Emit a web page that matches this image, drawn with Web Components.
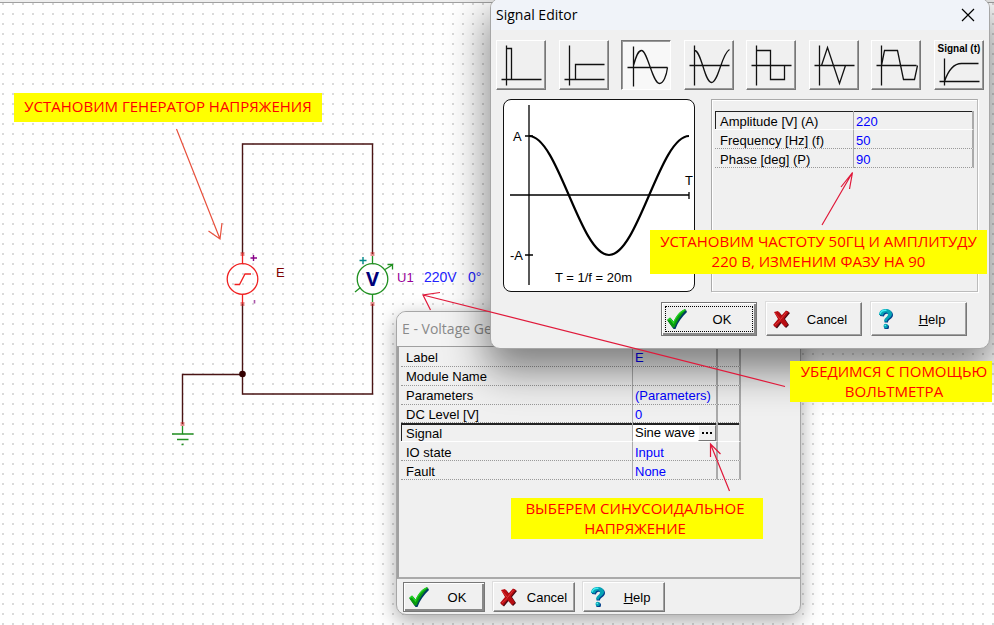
<!DOCTYPE html>
<html lang="ru">
<head>
<meta charset="utf-8">
<title>Signal Editor</title>
<style>
  body { margin: 0; font-family: "Liberation Sans", Arial, sans-serif; font-size: 13px; color: #000; }
</style>
</head>
<body>
<schematic-desktop></schematic-desktop>

<script>
const define = (name, html, setup) => {
  const template = document.createElement('template');
  template.innerHTML = html;
  customElements.define(name, class extends HTMLElement {
    constructor() {
      super();
      this.attachShadow({ mode: 'open' }).append(template.content.cloneNode(true));
    }
    connectedCallback() { if (setup) setup(this, this.shadowRoot); }
  });
};

/* Yellow callout */
define('note-label', `
  <style>
    :host { display: block; box-sizing: border-box; background: #ff0; color: #f00; text-align: center;
            font: 15px/20px "Open Sans", "Noto Sans", sans-serif; white-space: nowrap; padding: 0 2px 1px; }
  </style>
  <slot></slot>`);

/* Window frame */
define('app-window', `
  <style>
    :host { display: flex; flex-direction: column; box-sizing: border-box; background: #f0f0f0;
            border: 1px solid #a6a6a6; border-radius: 10px; overflow: hidden; }
    header { display: flex; align-items: center; justify-content: space-between; background: var(--bar, #f0f3f9);
             color: var(--bar-text, #000); padding: 0 14px 0 5px; height: var(--bar-height, 31px); }
    h2 { margin: 0; font: 14px/20px "Open Sans", "Noto Sans", sans-serif; white-space: nowrap; }
    button { border: 0; background: none; padding: 0; display: flex; }
    .body { flex: 1; display: flex; flex-direction: column; }
  </style>
  <header><h2></h2></header>
  <div class="body"><slot></slot></div>`,
  (host, root) => {
    root.querySelector('h2').textContent = host.getAttribute('caption');
    if (host.hasAttribute('closable')) {
      const b = document.createElement('button');
      b.setAttribute('aria-label', 'Close');
      b.innerHTML = '<svg width="14" height="14" viewBox="0 0 14 14"><path d="M1 1 13 13M13 1 1 13" stroke="#000" stroke-width="1.2" fill="none"/></svg>';
      root.querySelector('header').append(b);
    }
  });

const glyphs = {
  ok: `<path d="M2 12 5 9.500 8.500 13.500C11 8 15 3 20 1L21 3C16 8 12 13 9.500 20L7.500 20Z" fill="#003a66"/>
       <path d="M1 11 4 8.500 7.500 13C10 7 14 2 19 0L20 1C15 6 11 12 8.500 18.500L6.500 18.500Z" fill="#0a9a10"/>
       <path d="M2 11 4 9.500 7.500 14C10 8 14 3 18.500 1" stroke="#22d822" stroke-width="1.300" fill="none"/>`,
  cancel: `<path d="M4 4 8 3 11.500 7 16 2 19 4 14 10 18 16 15 19 10.500 14 6 19.500 3 17 8 11Z" fill="#4a0a14"/>
       <path d="M3 3 7 2 10.500 6.500 15 1.500 18 3 13 9.500 17 15.500 14 18 9.500 13 5 18.500 2 16 7 10Z" fill="#b80d12"/>
       <path d="M4 4 9.500 10.500 15.500 3M9.500 11 4 16" stroke="#e0373a" stroke-width="1" fill="none"/>`,
  help: `<path d="M4 7C4 2.500 7 1 10.500 1C14.500 1 17 3 17 6C17 10 12 10 12 13.500H8.500C8.500 9 12.500 9 12.500 6.500C12.500 4 8.500 4 8 7.500Z" fill="#003d8a"/>
       <circle cx="10.500" cy="18" r="2.500" fill="#003d8a"/>
       <path d="M3 6C3 2 6 0 9.500 0C13.500 0 16 2 16 5C16 9 11 9 11 12.500H8C8 8.500 12 8 12 5.500C12 2.500 7.500 3 7 6.500Z" fill="#06a3b5"/>
       <path d="M4 5C5 2 8 1 10.500 1.300" stroke="#42eef2" stroke-width="1.300" fill="none"/>
       <circle cx="9.700" cy="17" r="2.200" fill="#06a3b5"/><circle cx="9.200" cy="16.500" r="0.800" fill="#5ff4f5"/>`
};

/* Dialog push button with a glyph */
define('glyph-button', `
  <style>
    :host { display: block; width: var(--button-width, 96px); }
    button { box-sizing: border-box; width: 100%; height: var(--button-height, 34px); display: flex; align-items: center;
             padding: 0 4px; background: #f0f0f0; font: inherit; color: #000;
             border: 1px solid; border-color: #fff #777 #777 #fff; box-shadow: inset -1px -1px #a0a0a0, -1px -1px #ddd; }
    button.default { border: 1px solid #777; box-shadow: inset 1px 1px #fff, inset -2px -2px #888; }
    button.focus { outline: 1px dotted #000; outline-offset: -5px; }
    svg { flex: none; width: 22px; height: 20px; }
    span { flex: 1; text-align: center; padding-left: var(--text-shift, 4px); }
  </style>
  <button type="button"><svg viewBox="0 0 22 20"></svg><span><slot></slot></span></button>`,
  (host, root) => {
    root.querySelector('svg').innerHTML = glyphs[host.getAttribute('glyph')];
    if (host.hasAttribute('default')) root.querySelector('button').classList.add('default');
    if (host.hasAttribute('focus')) root.querySelector('button').classList.add('focus');
  });

/* Waveform picker */
const waves = [
  ['Pulse', 'M10 5V45M5 39H45M10 8H15V39'],
  ['Unit step', 'M10 5V45M5 39H45M16 39V24H45'],
  ['Sine wave', 'M12 6V46M6 27H46M12 25C15 14 17 10 20 10C26 10 31 43 38 43C42 43 45 35 46 27'],
  ['Cosine wave', 'M10 5V45M5 25H45M10 10C17 10 20 42 27 42C34 42 37 13 45 9'],
  ['Square wave', 'M10 5V45M5 25H45M10 10H24V39H38V25'],
  ['Triangular wave', 'M10 5V45M5 25H45M12 25 18 7 30 43 36 25'],
  ['Trapezoidal wave', 'M10 5V45M5 25H45M10 25 13 10H26L32 39H43L46 25'],
  ['Signal (t)', 'M10 18V45M5 41H45M10 41C14 29 20 23 27 23H44']
];
define('wave-toolbar', `
  <style>
    :host { display: flex; justify-content: space-between; }
    button { box-sizing: border-box; width: 50px; height: 50px; padding: 0; background: #f0f0f0;
             border: 1px solid; border-color: #fff #777 #777 #fff; box-shadow: inset -1px -1px #999; display: grid; overflow: hidden; }
    button[aria-pressed="true"] { background: #f8f8f8; border-color: #777 #fff #fff #777; box-shadow: inset 1px 1px #999; }
    button > * { grid-area: 1 / 1; }
    svg { width: 48px; height: 48px; }
    path { fill: none; stroke: #111; stroke-width: 1.3; }
    span { font: bold 10px/12px "Liberation Sans", Arial, sans-serif; padding-top: 2px; align-self: start; text-align: center; white-space: nowrap; }
  </style>`,
  (host, root) => {
    waves.forEach(([name, d], i) => {
      const b = document.createElement('button');
      b.type = 'button';
      b.setAttribute('aria-label', name);
      b.setAttribute('aria-pressed', String(i === 2));
      b.innerHTML = `<svg viewBox="0.5 0.5 48 48"><path d="${d}"/></svg>` + (i === 7 ? `<span>${name}</span>` : '');
      root.append(b);
    });
  });

define('wave-preview', `
  <style>
    :host { display: block; box-sizing: border-box; width: 192px; height: 193px; background: #fff; border: 1px solid #111; border-radius: 8px; }
    svg { display: block; width: 190px; height: 190px; overflow: visible; }
    text { font-size: 13px; }
  </style>
  <svg viewBox="1 1 190 190" fill="none" stroke="#000">
    <path d="M26 6V186M22 37H30M22 156H30M7 96H186M186 93V100" stroke-width="1.3"/>
    <path d="M26 37C55 37 77 156 106 156S157 37 186 37" stroke-width="2.2"/>
    <g fill="#000" stroke="none">
      <text x="10" y="42">A</text><text x="7" y="161">-A</text><text x="182" y="86">T</text>
      <text x="52" y="183">T = 1/f = 20m</text>
    </g>
  </svg>`);

/* Property table; the rows attribute holds JSON pairs of [name, value] */
define('property-grid', `
  <style>
    :host { display: block; width: var(--grid-width); }
    table { border-collapse: separate; border-spacing: 0; table-layout: fixed; width: 100%; height: var(--grid-height); }
    th, td { height: 17px; padding: 3px 0 0 2px; box-sizing: border-box; border-bottom: 1px dotted #999; border-right: 2px solid #aaa;
             font-weight: normal; line-height: 14px; text-align: left; white-space: nowrap; }
    th { padding-left: 5px; width: var(--name-width); border-right-width: 1px; }
    td { color: #00f; }
    tr.current > * { border-bottom: 1px solid #fff; box-shadow: inset 0 var(--rule, 2px) #222; }
    tr.current th { box-shadow: inset 1px var(--rule, 2px) #222; }
    td.extra { width: 23px; }
    .edit { display: flex; align-items: stretch; height: 16px; background: #fff; }
    input { flex: 1; min-width: 0; border: 0; padding: 1px 0 0; background: none; font: inherit; outline: none; }
    tr.current td.field { padding: 1px 0 0 2px; background: #fff; }
    .edit button { width: 18px; padding: 0; background: #f0f0f0; border: 1px solid; border-color: #fff #777 #777 #fff;
                   display: flex; align-items: center; justify-content: center; }
  </style>
  <table><tbody></tbody></table>`,
  (host, root) => {
    const current = +host.getAttribute('current');
    root.querySelector('tbody').innerHTML = JSON.parse(host.getAttribute('rows')).map(([name, value], i) => {
      const field = host.hasAttribute('extra') && i === current;
      const cell = field
        ? `<td class="field"><div class="edit"><input aria-label="${name}" value="${value}"><button type="button" aria-label="Edit signal"><svg width="10" height="2"><path d="M0 0h2v2h-2zM4 0h2v2h-2zM8 0h2v2h-2z"/></svg></button></div></td>`
        : `<td>${value}</td>`;
      return `<tr class="${i === current ? 'current' : ''}"><th scope="row">${name}</th>${cell}${host.hasAttribute('extra') ? '<td class="extra"></td>' : ''}</tr>`;
    }).join('');
  });

define('signal-editor', `
  <style>
    :host { display: block; }
    app-window { box-shadow: 0 18px 40px 4px rgba(0,0,0,.48); }
    wave-toolbar { padding: 10px 5px 0 5px; }
    .work { display: flex; gap: 16px; padding: 9px 11px 0 12px; }
    .panel { flex: 1; border: 1px solid; border-color: #aaa #bbb #bbb #aaa; box-shadow: inset 1px 1px #fff, 1px 1px #fff; padding: 11px 3px 0; }
    property-grid { --grid-width: 100%; --grid-height: 57px; --name-width: 139px; --rule: 1px; }
    footer { display: flex; justify-content: flex-end; gap: 9px; padding: 10px 22px 12px 0; }
  </style>
  <app-window caption="Signal Editor" closable>
    <wave-toolbar></wave-toolbar>
    <div class="work">
      <wave-preview></wave-preview>
      <div class="panel">
        <property-grid current="0" rows='[["Amplitude [V] (A)","220"],["Frequency [Hz] (f)","50"],["Phase [deg] (P)","90"]]'></property-grid>
      </div>
    </div>
    <footer>
      <glyph-button glyph="ok" default focus>OK</glyph-button>
      <glyph-button glyph="cancel">Cancel</glyph-button>
      <glyph-button glyph="help"><u>H</u>elp</glyph-button>
    </footer>
  </app-window>`);

define('generator-dialog', `
  <style>
    :host { display: block; }
    app-window { --bar: #f3f3f3; --bar-text: #8a8a8a; --bar-height: 34px; box-shadow: 0 6px 20px rgba(0,0,0,.35); }
    .client { border-top: 1px solid #a0a0a0; border-left: 2px solid #a0a0a0; border-bottom: 2px solid #aaa; padding: 1px 2px 97px 2px; }
    property-grid { --grid-width: 340px; --grid-height: 132px; --name-width: 232px; }
    footer { display: flex; gap: 8px; padding: 3px 6px 2px; --button-width: 82px; --button-height: 30px; --text-shift: 4px; }
  </style>
  <app-window caption="E - Voltage Generator">
    <div class="client">
      <property-grid current="4" extra rows='[["Label","E"],["Module Name",""],["Parameters","(Parameters)"],["DC Level [V]","0"],["Signal","Sine wave"],["IO state","Input"],["Fault","None"]]'></property-grid>
    </div>
    <footer>
      <glyph-button glyph="ok" default>OK</glyph-button>
      <glyph-button glyph="cancel">Cancel</glyph-button>
      <glyph-button glyph="help"><u>H</u>elp</glyph-button>
    </footer>
  </app-window>`);

define('circuit-drawing', `
  <style>
    :host { display: block; }
    svg { display: block; width: 490px; height: 450px; }
    text { font-size: 14px; }
  </style>
  <svg viewBox="0 0 490 450" fill="none">
    <path d="M242.500 254V144H372.500V254M242.500 304V394H372.500V304M242.500 374.500H182.500V424" stroke="#4a1414" stroke-width="1.400"/>
    <circle cx="242.500" cy="374" r="3.300" fill="#300"/>
    <g stroke="#f02020" stroke-width="1.300">
      <circle cx="242.500" cy="279" r="15.300"/>
      <path d="M242.500 253V264M242.500 294V304M234.500 284.500H239.500L245 274H251"/>
      <path d="M240.500 253H244.500M240.500 255H244.500M240.500 303H244.500M240.500 305H244.500M370.500 253H374.500M370.500 255H374.500M370.500 303H374.500M370.500 305H374.500M180.500 423H184.500M180.500 425H184.500" stroke="#c22" stroke-width="1"/>
    </g>
    <g stroke="#209020" stroke-width="1.300">
      <circle cx="372.500" cy="279" r="15.300"/>
      <path d="M372.500 256V264M372.500 294V302M385 269.500 393 264.500M387.500 264.500H392.500V269.500M355 292 360.500 287.500M182.500 426V434M172 434H193.500M177 439.500H188.500M181.500 444.500H183.500"/>
    </g>
    <path d="M250.500 258H257M253.500 255V261" stroke="#808" stroke-width="1.400"/>
    <path d="M359.500 260.500H366.500M363 257V264" stroke="#088" stroke-width="1.400"/>
    <path d="M254.500 300V303.500" stroke="#a5a" stroke-width="1.600"/>
    <text x="276" y="277" fill="#800000" style="font-size:13px">E</text>
    <text x="372.500" y="286" fill="#00007a" text-anchor="middle" style="font:bold 20px 'Open Sans',sans-serif">V</text>
    <text x="397" y="282" fill="#909" style="font-size:13px">U1</text>
    <text x="424" y="282" fill="#22f">220V</text>
    <text x="468" y="282" fill="#22f">0°</text>
  </svg>`);

define('pointer-arrows', `
  <style>
    :host { display: block; pointer-events: none; }
    svg { display: block; width: 994px; height: 625px; }
  </style>
  <svg viewBox="0 0 994 625" fill="none" stroke="#e0193a" stroke-width="1.2">
    <path d="M176.500 129 220 239M208.500 231 220 239 222 223" stroke="#e8503c"/>
    <path d="M785 386.500 423 295M440 292.500 423 295 430.500 310"/>
    <path d="M822 225 852.500 172.500M841 187 852.500 172.500 849.500 189"/>
    <path d="M729.500 491 710.500 444M710.500 457 710.500 444 720.500 454"/>
  </svg>`);

define('schematic-desktop', `
  <style>
    :host { display: block; position: relative; min-height: 100vh; overflow: hidden;
            background: radial-gradient(circle at 3px 4px, #d4d4d4 0, #ddd 1px, transparent 1px) 0 0 / 10px 10px #fff; }
    .edge { height: 2px; background: #eee; border-bottom: 1px solid #a0a0a0; }
    circuit-drawing, pointer-arrows, generator-dialog, signal-editor, note-label { position: absolute; }
    circuit-drawing, pointer-arrows { left: 0; top: 0; }
    generator-dialog { left: 396px; top: 311px; width: 405px; }
    signal-editor { left: 490px; top: -2px; width: 500px; }
    .n1 { left: 14px; top: 93px; width: 308px; padding: 3px 0 6px; }
    .n2 { left: 650px; top: 230px; width: 337px; padding: 1px 0 3px; }
    .n3 { left: 790px; top: 361px; width: 202px; padding-left: 8px; }
    .n4 { left: 511px; top: 498px; width: 252px; padding-right: 6px; }
  </style>
  <div class="edge"></div>
  <circuit-drawing></circuit-drawing>
  <generator-dialog></generator-dialog>
  <signal-editor></signal-editor>
  <note-label class="n1">УСТАНОВИМ ГЕНЕРАТОР НАПРЯЖЕНИЯ</note-label>
  <note-label class="n2">УСТАНОВИМ ЧАСТОТУ 50ГЦ И АМПЛИТУДУ<br>220 В, ИЗМЕНИМ ФАЗУ НА 90</note-label>
  <note-label class="n3">УБЕДИМСЯ С ПОМОЩЬЮ<br>ВОЛЬТМЕТРА</note-label>
  <note-label class="n4">ВЫБЕРЕМ СИНУСОИДАЛЬНОЕ<br>НАПРЯЖЕНИЕ</note-label>
  <pointer-arrows></pointer-arrows>`);
</script>
</body>
</html>
